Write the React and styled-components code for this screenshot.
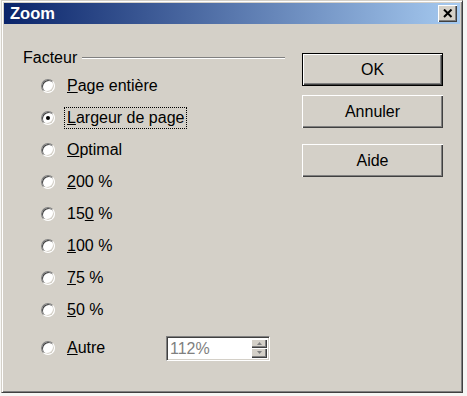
import React from 'react'
import styled, { createGlobalStyle } from 'styled-components'

const GlobalStyle = createGlobalStyle`
    body {
        margin: 0;
        background: #f6f6f4;
        font-family: 'Liberation Sans', Arial, sans-serif;
    }
`

const Window = styled.div`
    margin-left: 1px;
    width: 462px;
    height: 393px;
    box-sizing: border-box;
    background: #d4d0c8;
    border: 1px solid;
    border-color: #d4d0c8 #404040 #404040 #d4d0c8;
    box-shadow: inset 1px 1px #ffffff, inset -1px -1px #808080;
    padding: 2px;
    display: flex;
    flex-direction: column;
`

const TitleBar = styled.div`
    height: 21px;
    display: flex;
    align-items: center;
    justify-content: space-between;
    padding: 0 3px 0 6px;
    background: linear-gradient(to right, #0a246a, #a6caf0);
`

const Title = styled.span`
    color: #ffffff;
    font-weight: bold;
    font-size: 16.5px;
`

const CloseButton = styled.button`
    width: 19px;
    height: 17px;
    padding: 0;
    border: none;
    background: #d4d0c8;
    box-shadow: inset 1px 1px #ffffff, inset -1px -1px #404040, inset -2px -2px #808080;
    display: flex;
    align-items: center;
    justify-content: center;
`

const Body = styled.div`
    flex: 1;
    display: flex;
    padding: 0 17px 0 19px;
`

const LeftCol = styled.div`
    width: 262px;
    padding-top: 25px;
`

const FixedLine = styled.div`
    display: flex;
    align-items: center;
    gap: 5px;
    font-size: 16px;
    color: #000;
`

const Line = styled.div`
    flex: 1;
    border-top: 1px solid #808080;
    border-bottom: 1px solid #ffffff;
`

const RadioList = styled.div`
    display: flex;
    flex-direction: column;
    padding-left: 18px;
    margin-top: 3px;
`

const Row = styled.div`
    height: 32px;
    display: flex;
    align-items: center;
    gap: 11px;
    margin-top: ${(p) => p.$offset || 0}px;
`

const Radio = styled.span`
    position: relative;
    width: 14px;
    height: 14px;
    box-sizing: border-box;
    border-radius: 50%;
    background: #ffffff;
    border: 1px solid;
    border-color: #808080 #ffffff #ffffff #808080;
    box-shadow: inset 1px 1px #404040, inset -1px -1px #d4d0c8;

    &::after {
        content: '';
        display: ${(p) => (p.$checked ? 'block' : 'none')};
        position: absolute;
        left: 4px;
        top: 4px;
        width: 4px;
        height: 4px;
        border-radius: 50%;
        background: #000;
    }
`

const Label = styled.span`
    font-size: 16px;
    color: #000;
    padding: 0 1px;
    width: ${(p) => (p.$width ? `${p.$width}px` : 'auto')};
    outline: ${(p) => (p.$focus ? '1px dotted #000' : 'none')};
    outline-offset: 1px;
`

const SpinField = styled.div`
    width: 104px;
    height: 25px;
    box-sizing: border-box;
    display: flex;
    background: #ffffff;
    border: 1px solid;
    border-color: #808080 #ffffff #ffffff #808080;
    box-shadow: inset 1px 1px #404040, inset -1px -1px #d4d0c8;
    padding: 2px;
`

const SpinValue = styled.span`
    flex: 1;
    font-size: 16px;
    color: #808080;
    line-height: 20px;
    padding-left: 1px;
`

const SpinButtons = styled.div`
    width: 16px;
    display: flex;
    flex-direction: column;
`

const SpinButton = styled.div`
    flex: 1;
    background: #d4d0c8;
    box-shadow: inset 1px 1px #ffffff, inset -1px -1px #404040, inset -2px -2px #808080;
    display: flex;
    align-items: center;
    justify-content: center;
`

const RightCol = styled.div`
    margin-left: auto;
    width: 141px;
    padding-top: 29px;
    display: flex;
    flex-direction: column;
`

const Button = styled.button`
    height: 33px;
    margin-top: ${(p) => p.$gap || 0}px;
    font-family: 'Liberation Sans', Arial, sans-serif;
    font-size: 16px;
    color: #000;
    background: #d4d0c8;
    border: ${(p) => (p.$default ? '1px solid #000' : 'none')};
    box-shadow: inset 1px 1px #ffffff, inset -1px -1px #404040, inset -2px -2px #808080;
    padding: 0;
`

const options = [
    { pre: '', key: 'P', post: 'age entière' },
    { pre: '', key: 'L', post: 'argeur de page', checked: true },
    { pre: '', key: 'O', post: 'ptimal' },
    { pre: '', key: '2', post: '00 %' },
    { pre: '15', key: '0', post: ' %' },
    { pre: '', key: '1', post: '00 %' },
    { pre: '', key: '7', post: '5 %' },
    { pre: '', key: '5', post: '0 %' }
]

function App() {
    return (
        <>
            <GlobalStyle />
            <Window>
                <TitleBar>
                    <Title>Zoom</Title>
                    <CloseButton>
                        <svg width="10" height="9" viewBox="0 0 10 9">
                            <path d="M1 0.5 L8.5 8 M8.5 0.5 L1 8" stroke="#000" strokeWidth="2" />
                        </svg>
                    </CloseButton>
                </TitleBar>
                <Body>
                    <LeftCol>
                        <FixedLine>
                            Facteur
                            <Line />
                        </FixedLine>
                        <RadioList>
                            {options.map((o, i) => (
                                <Row key={i}>
                                    <Radio $checked={o.checked} />
                                    <Label $focus={o.checked}>
                                        {o.pre}
                                        <u>{o.key}</u>
                                        {o.post}
                                    </Label>
                                </Row>
                            ))}
                            <Row $offset={6}>
                                <Radio />
                                <Label $width={87}>
                                    <u>A</u>utre
                                </Label>
                                <SpinField>
                                    <SpinValue>112%</SpinValue>
                                    <SpinButtons>
                                        <SpinButton>
                                            <svg width="5" height="3" viewBox="0 0 5 3">
                                                <path d="M2.5 0 L5 3 L0 3 Z" fill="#808080" />
                                            </svg>
                                        </SpinButton>
                                        <SpinButton>
                                            <svg width="5" height="3" viewBox="0 0 5 3">
                                                <path d="M0 0 L5 0 L2.5 3 Z" fill="#808080" />
                                            </svg>
                                        </SpinButton>
                                    </SpinButtons>
                                </SpinField>
                            </Row>
                        </RadioList>
                    </LeftCol>
                    <RightCol>
                        <Button $default>OK</Button>
                        <Button $gap={9}>Annuler</Button>
                        <Button $gap={16}>Aide</Button>
                    </RightCol>
                </Body>
            </Window>
        </>
    )
}

export default App
